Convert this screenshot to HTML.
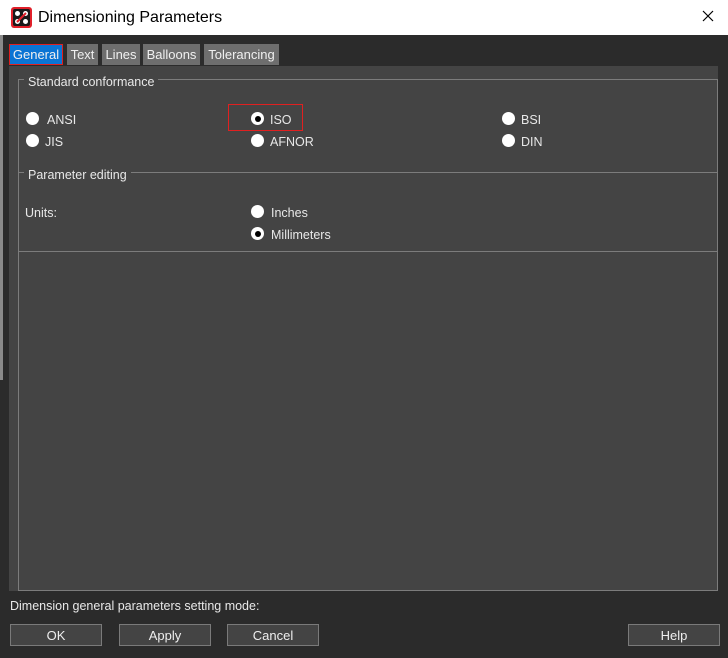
<!DOCTYPE html><html><head><style>
*{margin:0;padding:0;box-sizing:border-box}
body{width:728px;height:658px;background:#2b2b2b;font-family:"Liberation Sans",sans-serif;font-size:12.5px;color:#e8e8e8;position:relative;overflow:hidden}
.a{position:absolute}
.r{position:absolute;width:13px;height:13px;border-radius:50%;background:#fff}
.r.s::after{content:"";position:absolute;left:3.5px;top:3.5px;width:6px;height:6px;border-radius:50%;background:#000}
.t{position:absolute;height:21px;top:44px;background:#6e6e6e;color:#f0f0f0;font-size:13px;line-height:22px;text-align:center}
.b{position:absolute;top:624px;height:22px;border:1px solid #7a7a7a;background:#444;color:#eee;text-align:center;line-height:22px;font-size:13px}
</style></head><body>
<div class="a" style="left:0;top:0;width:728px;height:35px;background:#fff"></div>
<div class="a" style="left:0;top:35px;width:3px;height:345px;background:#8a8a8a"></div>
<svg class="a" style="left:11px;top:7px" width="21" height="21" viewBox="0 0 21 21"><rect x="0" y="0" width="21" height="21" rx="3" fill="#e0202a"/><rect x="2" y="2" width="17" height="17" rx="2" fill="#1a1a1a"/><circle cx="6.5" cy="6.5" r="2.5" fill="#fff"/><circle cx="14.5" cy="6.5" r="2.5" fill="#fff"/><circle cx="6.5" cy="14.5" r="2.5" fill="#fff"/><circle cx="14.5" cy="14.5" r="2.5" fill="#fff"/><line x1="6" y1="15" x2="15" y2="6" stroke="#e0202a" stroke-width="2"/></svg>
<div class="a" style="left:38px;top:9px;font-size:16px;color:#000">Dimensioning Parameters</div>
<svg class="a" style="left:702px;top:10px" width="12" height="12" viewBox="0 0 12 12"><path d="M1 1L11 11M11 1L1 11" stroke="#000" stroke-width="1.2"/></svg>
<div class="t" style="left:9px;width:54px;background:#0a74d4;border:1px solid #e02020;line-height:20px">General</div>
<div class="t" style="left:67px;width:31px">Text</div>
<div class="t" style="left:102px;width:38px">Lines</div>
<div class="t" style="left:143px;width:57px">Balloons</div>
<div class="t" style="left:204px;width:75px">Tolerancing</div>
<div class="a" style="left:9px;top:66px;width:709px;height:525px;background:#444"></div>
<div class="a" style="left:18px;top:79px;width:700px;height:512px;border:1px solid #7c7c7c"></div>
<div class="a" style="left:24px;top:75px;padding:0 4px;background:#444">Standard conformance</div>
<div class="a" style="left:18px;top:172px;width:700px;height:80px;border:1px solid #7c7c7c"></div>
<div class="a" style="left:24px;top:168px;padding:0 4px;background:#444">Parameter editing</div>
<div class="a" style="left:228px;top:104px;width:75px;height:27px;border:1px solid #e02020"></div>
<div class="r" style="left:26px;top:112px"></div><div class="a" style="left:47px;top:113px">ANSI</div>
<div class="r" style="left:26px;top:134px"></div><div class="a" style="left:45px;top:135px">JIS</div>
<div class="r s" style="left:251px;top:112px"></div><div class="a" style="left:270px;top:113px">ISO</div>
<div class="r" style="left:251px;top:134px"></div><div class="a" style="left:270px;top:135px">AFNOR</div>
<div class="r" style="left:502px;top:112px"></div><div class="a" style="left:521px;top:113px">BSI</div>
<div class="r" style="left:502px;top:134px"></div><div class="a" style="left:521px;top:135px">DIN</div>
<div class="a" style="left:25px;top:206px">Units:</div>
<div class="r" style="left:251px;top:205px"></div><div class="a" style="left:271px;top:206px">Inches</div>
<div class="r s" style="left:251px;top:227px"></div><div class="a" style="left:271px;top:228px">Millimeters</div>
<div class="a" style="left:10px;top:599px">Dimension general parameters setting mode:</div>
<div class="b" style="left:10px;width:92px">OK</div>
<div class="b" style="left:119px;width:92px">Apply</div>
<div class="b" style="left:227px;width:92px">Cancel</div>
<div class="b" style="left:628px;width:92px">Help</div>
</body></html>
